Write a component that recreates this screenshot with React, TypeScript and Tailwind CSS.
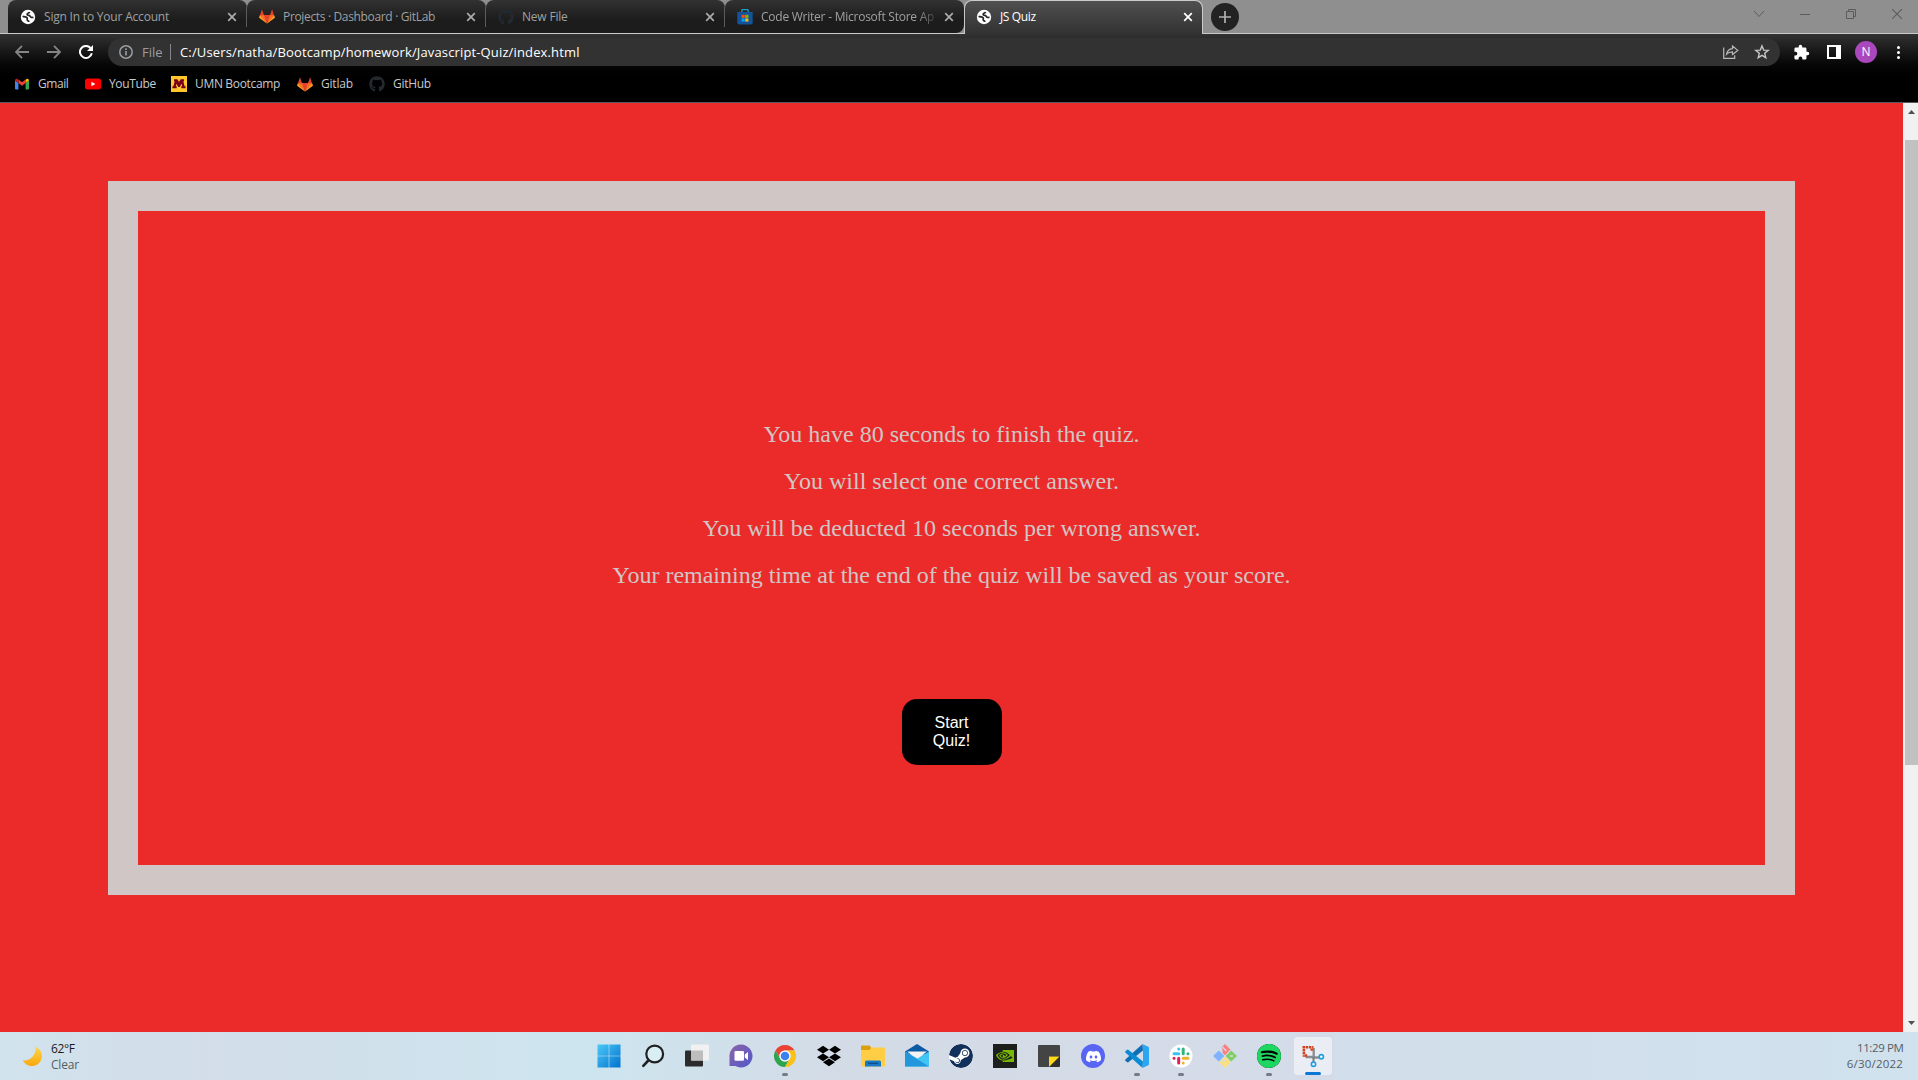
import React from "react";
import { FaDropbox, FaGithub } from "react-icons/fa";
import { SiDiscord, SiNvidia, SiSpotify, SiSteam } from "react-icons/si";

function Globe() {
  return (
    <svg viewBox="0 0 16 16" className="size-4">
      <circle cx="8" cy="8" r="7.2" fill="#fff" />
      <path
        d="M2.600 7.200C4.500 8.200 6.600 7.800 7.200 9c.5 1.100-.4 1.300.1 2.200.4.800 1.500.6 1.700 1.600M9.600 2.900C9.200 4.200 7.600 3.800 7.200 5c-.3 1 .6 1.300 1.700 1.400 1.600.2 1.300 1.900 2.900 2.100l1.700-.1"
        fill="none"
        stroke="#262626"
        strokeWidth="1.700"
      />
    </svg>
  );
}

function GitlabIcon() {
  return (
    <svg viewBox="0 0 16 15" className="h-[15px] w-4">
      <path d="M2.900.300.300 8.400 8 14.600 5.600 6H5Z" fill="#e24329" />
      <path d="m13.100.300 2.600 8.100L8 14.600 10.400 6h.6Z" fill="#e24329" />
      <path d="M5 6h6l-3 8.600Z" fill="#e24329" />
      <path d="M.8 6.200h4.300L8 14.600Z" fill="#fc6d26" />
      <path d="M15.200 6.200h-4.300L8 14.600Z" fill="#fc6d26" />
      <path d="M.8 6.200.1 8.800 8 14.600Z" fill="#fca326" />
      <path d="m15.200 6.200.7 2.600L8 14.600Z" fill="#fca326" />
    </svg>
  );
}

function StoreIcon() {
  return (
    <svg viewBox="0 0 16 16" className="size-4">
      <path d="M4.800 4V1.400q0-.8.8-.8h4.800q.8 0 .8.8V4" fill="none" stroke="#1c9fc4" strokeWidth="1.300" />
      <path d="M.3 3h15.400v10.500q0 2-2 2H2.300q-2 0-2-2Z" fill="#14539a" />
      <path d="M4.600 5.800h3.100v3.100H4.600Z" fill="#f25022" />
      <path d="M8.300 5.800h3.100v3.100H8.300Z" fill="#7fba00" />
      <path d="M4.600 9.500h3.100v3.100H4.600Z" fill="#00a4ef" />
      <path d="M8.300 9.500h3.100v3.100H8.300Z" fill="#ffb900" />
    </svg>
  );
}

function CloseIcon({ color }: { color: string }) {
  return (
    <svg viewBox="0 0 10 10" className="size-[10px]">
      <path d="m1.200 1.200 7.600 7.600m0-7.600L1.200 8.800" stroke={color} strokeWidth="1.700" />
    </svg>
  );
}

function Tab({ icon, title, label, last }: { icon: React.ReactNode; title: string; label: string; last?: boolean }) {
  return (
    <div
      className={
        "flex h-[33px] w-[239px] shrink-0 items-center rounded-t-lg bg-linear-to-b from-[#323232] to-[#1c1c1c] to-60% pl-3 text-[#9fa1a3] " +
        (last ? "rounded-br-lg" : "")
      }
    >
      <span className="flex w-4 shrink-0">{icon}</span>
      <span className={"ml-2 w-[175px] text-xs whitespace-nowrap " + label}>{title}</span>
      <span className="ml-2">
        <CloseIcon color="#a9abad" />
      </span>
      {!last && <span className="ml-auto h-5 w-px bg-[#5c5c5c]" />}
    </div>
  );
}

function TabStrip() {
  return (
    <div className="relative flex h-[34px] items-start border-b border-[#c9cbc9] bg-[#8f8f8f] pl-2">
      <Tab icon={<Globe />} title="Sign In to Your Account" label="tracking-[-0.2px]" />
      <Tab icon={<GitlabIcon />} title="Projects · Dashboard · GitLab" label="tracking-[-0.34px]" />
      <Tab icon={<FaGithub className="size-4 text-[#222930]" />} title="New File" label="tracking-[-0.2px]" />
      <Tab
        icon={<StoreIcon />}
        title="Code Writer - Microsoft Store Ap"
        label="tracking-[-0.24px] [mask-image:linear-gradient(to_right,black_155px,transparent_180px)]"
        last
      />
      <div className="flex h-[34px] w-[239px] shrink-0 items-center rounded-t-lg border border-b-0 border-[#c9cbc9] bg-linear-to-b from-[#505050] to-[#323232] pb-px pl-[11px] text-white">
        <Globe />
        <span className="ml-2 w-[183px] text-xs tracking-[-0.35px]">JS Quiz</span>
        <CloseIcon color="#fff" />
      </div>
      <div className="mt-[3px] ml-2 flex size-7 items-center justify-center rounded-full bg-[#222]">
        <svg viewBox="0 0 12 12" className="size-3">
          <path d="M6 0v12M0 6h12" stroke="#b0b0b0" strokeWidth="1.700" />
        </svg>
      </div>
      <div className="ml-auto flex h-7 w-[182px] items-center text-[#5c5c5c]">
        <span className="flex w-[46px] shrink-0 justify-center">
          <svg viewBox="0 0 12 8" className="h-2 w-3">
            <path d="m1 1 5 5.500L11 1" fill="none" stroke="currentColor" />
          </svg>
        </span>
        <span className="flex w-[46px] shrink-0 justify-center">
          <svg viewBox="0 0 10 10" className="size-[10px]">
            <path d="M0 5.500h10" stroke="currentColor" />
          </svg>
        </span>
        <span className="flex w-[46px] shrink-0 justify-center">
          <svg viewBox="0 0 10 10" className="size-[10px]">
            <path d="M.5 2.500h7v7h-7ZM2.500 2.500v-2h7v7h-2" fill="none" stroke="currentColor" />
          </svg>
        </span>
        <span className="flex w-[44px] shrink-0 justify-center pl-[2px]">
          <svg viewBox="0 0 10 10" className="size-[10px]">
            <path d="m0 0 10 10M10 0 0 10" stroke="currentColor" strokeWidth="1.100" />
          </svg>
        </span>
      </div>
    </div>
  );
}

function AddressRow() {
  return (
    <div className="flex h-[36px] items-center">
      <div className="flex w-[108px] shrink-0 items-center pl-[15px]">
        <svg viewBox="0 0 14 14" className="size-[14px]">
          <path d="M14 7H1.500M7 .8.900 7 7 13.200" fill="none" stroke="#858585" strokeWidth="1.800" />
        </svg>
        <svg viewBox="0 0 14 14" className="ml-[18px] size-[14px]">
          <path d="M0 7h12.500M7 .8 13.100 7 7 13.200" fill="none" stroke="#858585" strokeWidth="1.800" />
        </svg>
        <svg viewBox="0 0 14 14" className="ml-[18px] size-[14px]">
          <path d="M12.800 8.300A6 6 0 1 1 11.500 3" fill="none" stroke="#fff" strokeWidth="2" />
          <path d="M14 0v6H8Z" fill="#fff" />
        </svg>
      </div>
      <div className="flex h-7 w-[1672px] items-center rounded-full bg-[#323232] pl-[11px]">
        <svg viewBox="0 0 14 14" className="size-[14px] text-[#9a9ea2]">
          <circle cx="7" cy="7" r="6.200" fill="none" stroke="currentColor" strokeWidth="1.500" />
          <path d="M7 6v4.500M7 3.300v1.600" stroke="currentColor" strokeWidth="1.600" />
        </svg>
        <span className="ml-[9px] w-7 pt-px text-[13px] text-[#9a9ea2]">File</span>
        <span className="h-4 w-px bg-[#80868b]" />
        <span className="ml-[9px] pt-px text-[13px] tracking-[0.14px] whitespace-nowrap text-white">
          C:/Users/natha/Bootcamp/homework/Javascript-Quiz/index.html
        </span>
        <svg viewBox="0 0 16 14" className="ml-auto h-[14px] w-4 text-[#b6b8ba]">
          <path d="M.7 2.500v10.800h11v-3" fill="none" stroke="currentColor" strokeWidth="1.200" />
          <path d="M9.500 3.700V1l5.300 4.400-5.300 4.100V6.800c-2.700 0-4.500.7-5.900 2.400.6-3.300 2.600-5.200 5.900-5.500Z" fill="none" stroke="currentColor" strokeWidth="1.200" />
        </svg>
        <svg viewBox="0 0 16 16" className="mr-[10px] ml-[15px] size-4 text-[#c4c6c8]">
          <path d="m8 1.900 1.700 4.200 4.500.300-3.500 2.900 1.100 4.400L8 11.300l-3.800 2.400 1.100-4.400-3.500-2.900 4.500-.3Z" fill="none" stroke="currentColor" strokeWidth="1.400" />
        </svg>
      </div>
      <svg viewBox="0 0 24 24" className="ml-[13px] size-[17px]">
        <path
          d="M20.500 11H19V7a2 2 0 0 0-2-2h-4V3.500a2.500 2.500 0 0 0-5 0V5H4a2 2 0 0 0-2 2v3.800h1.500a2.700 2.700 0 0 1 0 5.400H2V20a2 2 0 0 0 2 2h3.800v-1.500a2.700 2.700 0 0 1 5.400 0V22H17a2 2 0 0 0 2-2v-4h1.500a2.500 2.500 0 0 0 0-5Z"
          fill="#fff"
        />
      </svg>
      <span className="ml-[17px] h-[14px] w-[14px] border-y-2 border-r-5 border-l-2 border-white" />
      <span className="ml-[14px] flex size-[22px] items-center justify-center rounded-full bg-[#ab47bc] text-[12px] text-white">N</span>
      <span className="ml-5 flex flex-col gap-[2px]">
        <i className="size-[3px] rounded-full bg-white" />
        <i className="size-[3px] rounded-full bg-white" />
        <i className="size-[3px] rounded-full bg-white" />
      </span>
    </div>
  );
}

function Bookmark({ icon, text, className }: { icon: React.ReactNode; text: string; className: string }) {
  return (
    <div className={"flex shrink-0 items-center text-xs whitespace-nowrap text-[#c8cacc] " + className}>
      <span className="flex w-4 shrink-0">{icon}</span>
      <span className="ml-2">{text}</span>
    </div>
  );
}

function BookmarksBar() {
  return (
    <div className="flex h-[28px] items-center pl-[14px]">
      <Bookmark
        className="w-[71px] tracking-[-0.45px]"
        text="Gmail"
        icon={
          <svg viewBox="0 0 16 12" className="h-3 w-4">
            <path d="M1 2.500 4.400 5v6.500H2q-1 0-1-1Z" fill="#4285f4" />
            <path d="M15 2.500 11.600 5v6.500H14q1 0 1-1Z" fill="#34a853" />
            <path d="M4.400 1.500 8 4.200l3.600-2.700V5L8 7.800 4.400 5Z" fill="#ea4335" />
            <path d="M1 2.500Q1 .500 3 .700l1.400 1V5L1 2.500Z" fill="#c5221f" />
            <path d="M15 2.500Q15 .500 13 .700l-1.400 1V5L15 2.500Z" fill="#fbbc04" />
          </svg>
        }
      />
      <Bookmark
        className="w-[86px] tracking-[-0.35px]"
        text="YouTube"
        icon={
          <svg viewBox="0 0 16 12" className="h-3 w-4">
            <rect y=".5" width="16" height="11" rx="2.500" fill="#f00" />
            <path d="M6.400 3.700v4.600l4-2.300Z" fill="#fff" />
          </svg>
        }
      />
      <Bookmark
        className="w-[126px] tracking-[-0.33px]"
        text="UMN Bootcamp"
        icon={
          <svg viewBox="0 0 16 16" className="size-4">
            <path d="M0 0h16v16H0Z" fill="#ffc72c" />
            <path d="M3 3.300h3.400L8 6l1.600-2.700H13v2h-.7l1.300 4.900h1v2.100h-4.300v-2.100h.9l-.6-2.400L8.800 11H7.200L5.400 7.800l-.6 2.400h.9v2.100H1.400v-2.100h1l1.300-4.900H3Z" fill="#7a0019" />
          </svg>
        }
      />
      <Bookmark className="w-[72px] tracking-[-0.2px]" text="Gitlab" icon={<GitlabIcon />} />
      <Bookmark className="tracking-[-0.3px]" text="GitHub" icon={<FaGithub className="size-4 text-[#24292e]" />} />
    </div>
  );
}

const rules = [
  "You have 80 seconds to finish the quiz.",
  "You will select one correct answer.",
  "You will be deducted 10 seconds per wrong answer.",
  "Your remaining time at the end of the quiz will be saved as your score.",
];

function QuizPage() {
  return (
    <div className="flex h-[929px]">
      <main className="w-[1903px] bg-[#eb2b2a] pt-[78px] pl-[108px]">
        <section className="flex h-[714px] w-[1687px] flex-col items-center border-[30px] border-[#d0c6c5] pt-[210px]">
          <div className="flex flex-col gap-5 text-center font-['Liberation_Serif',serif] text-2xl leading-[27px] text-[#d0c6c5]">
            {rules.map((rule) => (
              <p key={rule}>{rule}</p>
            ))}
          </div>
          <button className="mt-[110px] h-[66px] w-[100px] rounded-[15px] bg-black px-5 font-['Liberation_Sans',sans-serif] text-base leading-[18px] text-white">
            Start Quiz!
          </button>
        </section>
      </main>
      <div className="flex w-[15px] flex-col items-end bg-[#f1f1f1]">
        <div className="flex h-[37px] w-full justify-center pt-[7px] pl-[2px]">
          <svg viewBox="0 0 7 4" className="h-1 w-[7px]">
            <path d="M0 4 3.500 0 7 4Z" fill="#505050" />
          </svg>
        </div>
        <div className="h-[625px] w-[13px] bg-[#c1c1c1]" />
        <div className="mt-auto flex h-[11px] w-full justify-center pl-[2px]">
          <svg viewBox="0 0 7 4" className="h-1 w-[7px]">
            <path d="M0 0 3.500 4 7 0Z" fill="#505050" />
          </svg>
        </div>
      </div>
    </div>
  );
}

function StartIcon() {
  return (
    <svg viewBox="0 0 24 24" className="size-6">
      <defs>
        <linearGradient id="win" x1="0" y1="0" x2="1" y2="1">
          <stop stopColor="#4cc8f8" />
          <stop offset="1" stopColor="#0072ce" />
        </linearGradient>
      </defs>
      <path d="M.5.500h11.200v11.200H.5ZM12.300.500h11.200v11.200H12.300ZM.5 12.300h11.200v11.200H.5ZM12.300 12.300h11.200v11.200H12.300Z" fill="url(#win)" />
    </svg>
  );
}

function SearchIcon() {
  return (
    <svg viewBox="0 0 24 24" className="size-6">
      <circle cx="13.700" cy="10" r="8.400" fill="#d9edf4" stroke="#202020" strokeWidth="2.200" />
      <path d="m7.300 16.500-5 5.300" stroke="#202020" strokeWidth="2.600" strokeLinecap="round" />
    </svg>
  );
}

function TaskViewIcon() {
  return (
    <svg viewBox="0 0 24 24" className="size-6">
      <rect x="0" y="6.500" width="18" height="16" rx="1" fill="#2c2c2c" />
      <rect x="6" y=".5" width="18" height="16" rx="1" fill="#f1f1f1" />
      <path d="M6 6.500h12v10H6Z" fill="#bdbdbd" />
    </svg>
  );
}

function ChatIcon() {
  return (
    <svg viewBox="0 0 24 24" className="size-6">
      <defs>
        <linearGradient id="chat" x1="0" y1="0" x2="1" y2="1">
          <stop stopColor="#8c63a8" />
          <stop offset="1" stopColor="#5059c9" />
        </linearGradient>
      </defs>
      <path d="M12 .5a11.500 11.500 0 1 1-5.500 21.600H.5v-9A11.500 11.500 0 0 1 12 .5Z" fill="url(#chat)" />
      <rect x="5.500" y="7" width="9.500" height="9.800" rx="1.200" fill="#fff" />
      <path d="M15.800 10.500 19 8v8l-3.200-2.500Z" fill="#fff" />
    </svg>
  );
}

function ChromeIcon() {
  return (
    <svg viewBox="0 0 24 24" className="size-6">
      <path d="M2.470 6.500A11 11 0 0 1 21.530 6.500H12a5.500 5.500 0 0 0-4.760 8.250Z" fill="#ea4335" />
      <path d="M2.470 6.500A11 11 0 0 0 12 23l4.760-8.250a5.500 5.500 0 0 1-9.520 0Z" fill="#2ea44f" />
      <path d="M21.530 6.500A11 11 0 0 1 12 23l4.760-8.250A5.500 5.500 0 0 0 12 6.500Z" fill="#fbc116" />
      <circle cx="12" cy="12" r="5.600" fill="#fff" />
      <circle cx="12" cy="12" r="4.300" fill="#3b82f0" />
    </svg>
  );
}

function ExplorerIcon() {
  return (
    <svg viewBox="0 0 24 24" className="size-6">
      <path d="M0 2.500q0-1 1-1h7.500l2 2.500H23q1 0 1 1v5H0Z" fill="#dd9f12" />
      <path d="M0 6h8.500l2-2.500H23q1 0 1 1V21.500q0 1-1 1H1q-1 0-1-1Z" fill="#ffce45" />
      <path d="M4 22.500V18q0-1.500 1.500-1.500h13Q20 16.500 20 18v4.500Z" fill="#1879c7" />
      <path d="M7 19.300h10" stroke="#0b4a83" strokeWidth="1.200" />
    </svg>
  );
}

function MailIcon() {
  return (
    <svg viewBox="0 0 24 24" className="size-6">
      <path d="M0 7.500 12 0l12 7.500v3H0Z" fill="#0c59a4" />
      <path d="M2 7.500h20L12 15Z" fill="#f3f3f3" />
      <path d="M0 7.500v15h24v-15L12.500 14.500Z" fill="#41c5f3" />
      <path d="m0 7.500 24 15H0Z" fill="#2497dc" />
    </svg>
  );
}

function SteamIcon() {
  return (
    <span className="relative flex size-6 items-center justify-center overflow-hidden rounded-full bg-white">
      <SiSteam className="size-6 text-[#12305c]" />
    </span>
  );
}

function NvidiaIcon() {
  return (
    <span className="flex size-6 items-center justify-center bg-[#1d1f1c]">
      <SiNvidia className="size-[18px] text-[#76b900]" />
    </span>
  );
}

function StickyIcon() {
  return (
    <svg viewBox="0 0 24 24" className="size-6">
      <path d="M2 1h20q1 0 1 1v10L12 23H2q-1 0-1-1V2q0-1 1-1Z" fill="#444" />
      <path d="M23 12v10q0 1-1 1H12V12Z" fill="#303030" />
      <path d="M12 12.500h10.500L12 23Z" fill="#ffda1a" />
    </svg>
  );
}

function DiscordIcon() {
  return (
    <span className="flex size-6 items-center justify-center rounded-full bg-[#5865f2]">
      <SiDiscord className="size-[15px] text-white" />
    </span>
  );
}

function VsCodeIcon() {
  return (
    <svg viewBox="0 0 24 24" className="size-6">
      <path d="M17.500 0 18 6.500 3.300 18.200q-.5.400-1 .1L.6 17q-.9-.9 0-1.700Z" fill="#0f6fb5" />
      <path d="M17.500 24 18 17.500 3.300 5.800q-.5-.4-1-.1L.6 7q-.9.900 0 1.700Z" fill="#0b8ad6" />
      <path d="M17.500 0 23.200 2.700q.8.400.8 1.300v16q0 .9-.8 1.300L17.500 24q.5-.3.500-1.500v-21Q18 .300 17.500 0Z" fill="#2aa6f2" />
    </svg>
  );
}

function SlackIcon() {
  return (
    <svg viewBox="0 0 24 24" className="size-6">
      <circle cx="12" cy="12" r="11.500" fill="#fff" />
      <g strokeWidth="3" strokeLinecap="round">
        <path d="M5 9.800h4.700M9.700 5v.1" stroke="#36c5f0" />
        <path d="M14.200 5v4.800M19 9.800h-.1" stroke="#2eb67d" />
        <path d="M14.200 14.200H19M14.200 19v-.1" stroke="#ecb22e" />
        <path d="M9.700 14.200V19M5 14.200h.1" stroke="#e01e5a" />
      </g>
    </svg>
  );
}

function GitIcon() {
  return (
    <svg viewBox="0 0 24 24" className="size-6">
      <path d="M12 0 17.500 5.600 12 11.300 9.500 8.800V5.500L8.600 3.500Z" fill="#f98080" />
      <path d="M5.800 6.400 11.400 12l-5.600 5.600L0 12Z" fill="#80b3ff" />
      <path d="M18.200 6.400 24 12l-5.800 5.600L12.600 12Z" fill="#80cf60" />
      <path d="m12 12.700 5.600 5.600L12 24l-5.600-5.700Z" fill="#fbe080" />
      <path d="m9.500 3 3.800 4M8.500 17.500l4-1.500M17 12h3" stroke="#d4dbe6" strokeWidth="1.300" />
    </svg>
  );
}

function SpotifyIcon() {
  return (
    <span className="flex size-6 items-center justify-center rounded-full bg-black">
      <SiSpotify className="size-6 text-[#1ed760]" />
    </span>
  );
}

function SnipIcon() {
  return (
    <svg viewBox="0 0 24 24" className="size-6">
      <path d="M12.700 4.500V14H22M4.500 13.500h8" fill="none" stroke="#8a8d90" strokeWidth="2.300" transform="translate(0 -.5)" />
      <path d="M12.500 13v5" stroke="#777b80" strokeWidth="2" />
      <path d="M1.500 3.300h11M2.900 4.900v7.800" fill="none" stroke="#d2431c" strokeWidth="2.600" strokeDasharray="2.500 .7" />
      <path d="M10.700 4.500v2.300M4 11.500h2.200" stroke="#d2431c" strokeWidth="2.400" />
      <circle cx="20.300" cy="12.700" r="2.100" fill="#fff" stroke="#229ee0" strokeWidth="1.700" />
      <circle cx="12.500" cy="20.300" r="2.100" fill="#fff" stroke="#229ee0" strokeWidth="1.700" />
    </svg>
  );
}

const apps: { icon: React.ReactNode; running?: boolean }[] = [
  { icon: <StartIcon /> },
  { icon: <SearchIcon /> },
  { icon: <TaskViewIcon /> },
  { icon: <ChatIcon /> },
  { icon: <ChromeIcon />, running: true },
  { icon: <FaDropbox className="size-6 text-black" /> },
  { icon: <ExplorerIcon /> },
  { icon: <MailIcon /> },
  { icon: <SteamIcon /> },
  { icon: <NvidiaIcon /> },
  { icon: <StickyIcon /> },
  { icon: <DiscordIcon /> },
  { icon: <VsCodeIcon />, running: true },
  { icon: <SlackIcon />, running: true },
  { icon: <GitIcon /> },
  { icon: <SpotifyIcon />, running: true },
];

function Taskbar() {
  return (
    <footer className="flex h-12 bg-linear-to-r from-[#d2e2ed] via-[#d2dbe8] to-[#d0e2ee]">
      <div className="flex w-[587px] shrink-0 bg-linear-to-r from-[#d1e3ed] via-[#d2dde9] via-35% to-[#cde5ef] pl-[22px]">
        <svg viewBox="0 0 20 20" className="mt-[14px] size-5">
          <defs>
            <linearGradient id="moon" x1="0" y1="0" x2="0" y2="1">
              <stop stopColor="#ffd54a" />
              <stop offset="1" stopColor="#f9a80c" />
            </linearGradient>
          </defs>
          <path d="M13.500.800A10 10 0 1 1 .8 14.300C8 15.500 14.500 9 13.500.800Z" fill="url(#moon)" />
        </svg>
        <div className="mt-[9px] ml-[9px] text-xs leading-4">
          <p className="tracking-[-0.4px] text-[#1b1b1b]">62°F</p>
          <p className="tracking-[-0.2px] text-[#555d63]">Clear</p>
        </div>
      </div>
      <div className="flex bg-linear-to-r from-[#cde5ef] via-[#d3dbe6] via-35% to-[#d5dce9]">
        {apps.map((app, i) => (
          <div key={i} className="flex w-11 flex-col items-center pt-3">
            {app.icon}
            {app.running && <span className="mt-[5px] h-[3px] w-[6px] rounded-full bg-[#757b82]" />}
          </div>
        ))}
        <div className="flex w-11 flex-col items-center pt-[5px]">
          <div className="flex h-[38px] w-[38px] flex-col items-center rounded-sm bg-[#eaeef4] pt-[7px]">
            <SnipIcon />
            <span className="mt-1 h-[3px] w-4 rounded-full bg-[#0b78d4]" />
          </div>
        </div>
      </div>
      <div className="ml-auto flex flex-col items-end pt-2 pr-[15px] text-[11.500px] leading-4 text-[#555e66]">
        <p className="-mr-[0.400px] tracking-[-0.400px]">11:29 PM</p>
        <p className="tracking-[0.200px]">6/30/2022</p>
      </div>
    </footer>
  );
}

export default function App() {
  return (
    <div className="h-[1080px] w-[1918px] overflow-hidden font-['Open_Sans','Noto_Sans',sans-serif]">
      <TabStrip />
      <div className="h-[69px] border-b border-[#555b5b] bg-linear-to-b from-[#323232] to-black to-75%">
        <AddressRow />
        <BookmarksBar />
      </div>
      <QuizPage />
      <Taskbar />
    </div>
  );
}
